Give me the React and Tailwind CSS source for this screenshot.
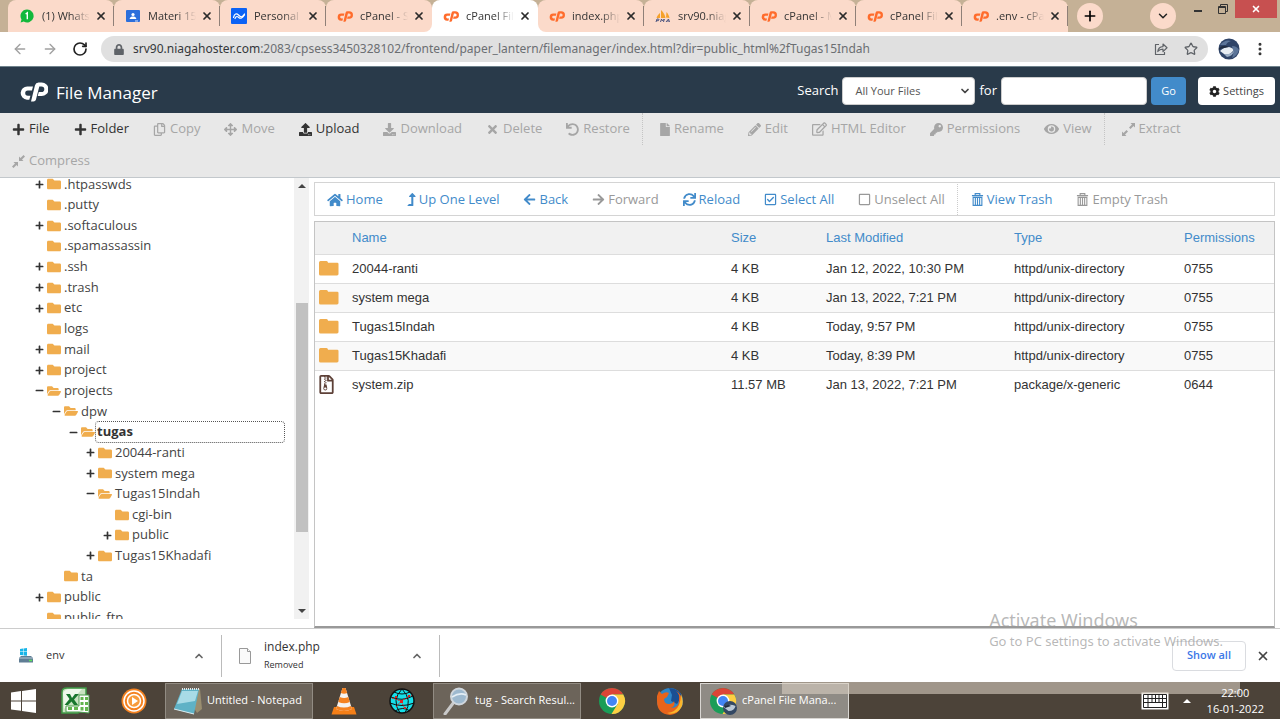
import React from "react";
import {
  FaPlus, FaMinus, FaRegCopy, FaArrowsAlt, FaUpload, FaDownload, FaTimes, FaUndo, FaFile, FaPencilAlt,
  FaRegEdit, FaKey, FaEye, FaHome, FaLevelUpAlt, FaArrowLeft, FaArrowRight,
  FaSync, FaRegCheckSquare, FaRegSquare, FaFolder, FaFolderOpen, FaCog, FaRegFileArchive, FaLock,
} from "react-icons/fa";
import { ArrowLeft, ArrowRight, RotateCw, Star, MoreVertical, ChevronDown, ChevronUp, X, Plus } from "lucide-react";

const CpLogo = ({ className }) => (
  <svg viewBox="0 0 28 20" className={className} fill="currentColor">
    <path d="M7.500 4.500H13l-1.100 4H7.800a2.600 2.600 0 0 0 0 5.200h2.600l-1.100 4H7A6.600 6.600 0 0 1 7.500 4.500z" />
    <path fillRule="evenodd" d="M11 19.500L15 3.200Q15.800.5 18.500.5h3.200a6.800 6.800 0 0 1 0 13.600h-4l1.100-4h2.700a2.800 2.800 0 0 0 0-5.600h-2.200L15.900 17.800Q15.400 19.500 13.500 19.500z" />
  </svg>
);
const WhatsApp = () => (
  <svg viewBox="0 0 14 14" className="h-3.5 w-3.5">
    <path d="M7 .5a6.500 6.500 0 1 1-3.200 12.100L.6 13.400l.9-3A6.500 6.500 0 0 1 7 .5z" fill="#12b83c" />
    <path d="M5.600 5l1.700-1.200v6.400" fill="none" stroke="#fff" strokeWidth="1.400" />
  </svg>
);
const Classroom = () => (
  <svg viewBox="0 0 14 14" className="h-3.5 w-3.5">
    <rect y="1" width="14" height="12" rx="1" fill="#2c6fdb" />
    <circle cx="7" cy="5.500" r="1.600" fill="#fff" />
    <path d="M3.600 10c.3-2 2-2.400 3.400-2.400s3.100.4 3.400 2.400z" fill="#fff" />
    <path d="M9 12h3" stroke="#cfe0fb" />
  </svg>
);
const Wave = () => (
  <svg viewBox="0 0 16 16" className="h-4 w-4">
    <rect width="16" height="16" rx="1" fill="#0b62f5" />
    <path d="M2.500 9.500C3.500 5.500 5.500 5 7.500 7s3.500 3 6-1M4 10.500c1.500-3 2.500-2 4-.8s3.500.3 5.500-2.700" fill="none" stroke="#fff" strokeWidth="1.200" strokeLinecap="round" />
  </svg>
);
const Pma = () => (
  <svg viewBox="0 0 16 14" className="h-3.5 w-4">
    <path d="M5 9V4C3.500 5 2 7 1.500 9zM6 9V1c2.500 2 4 5 4.500 8zM11 8.500L11.500 3c1.500 1.500 2.500 3.500 3 6z" fill="#f5a12b" />
    <path d="M1 13l1-3h1.500q1.300 1-.2 1.700H1.800M5.500 13l1-3 1 2 1.800-2-.8 3M11 13l2.500-3 1 3M12 12h2" fill="none" stroke="#4a5480" strokeWidth="1" />
  </svg>
);
const CpIcon = () => <CpLogo className="h-[11px] w-4 text-[#ff6c2c]" />;

const tabs = [
  { Icon: WhatsApp, title: "(1) WhatsApp", line: true },
  { Icon: Classroom, title: "Materi 15", line: true },
  { Icon: Wave, title: "Personal", line: true },
  { Icon: CpIcon, title: "cPanel - S", corner: "rounded-br-lg" },
  { Icon: CpIcon, title: "cPanel File", active: true },
  { Icon: CpIcon, title: "index.php", corner: "rounded-bl-lg", line: true },
  { Icon: Pma, title: "srv90.niag", line: true },
  { Icon: CpIcon, title: "cPanel - M", line: true },
  { Icon: CpIcon, title: "cPanel File", line: true },
  { Icon: CpIcon, title: ".env - cPan", line: true },
];

function Tab({ Icon, title, active, line, corner }) {
  return (
    <div className={corner ? "bg-[linear-gradient(to_bottom,#c5b196_50%,#fff_50%)]" : ""}>
      <div className={"flex h-8 w-[106px] items-center rounded-t-lg pl-[11px] " + (active ? "bg-white " : "bg-[#fbdaca] ") + (corner || "")}>
        <span className="flex w-4 shrink-0 justify-center"><Icon /></span>
        <span className="ml-[7px] w-[48px] overflow-hidden whitespace-nowrap text-[11px] text-[#333] [mask-image:linear-gradient(to_right,#000_60%,transparent)]">{title}</span>
        <button aria-label="Close tab" className="ml-[5px]"><X className="h-3 w-3 text-[#2b2b2b]" strokeWidth={3.500} /></button>
        <span className={line ? "ml-auto h-5 w-px bg-[#8f8078]" : "ml-auto w-px"} />
      </div>
    </div>
  );
}

function TabStrip() {
  return (
    <div className="flex h-8 bg-[#c5b196] pl-2">
      <div className="flex">
        {tabs.map((t, i) => <Tab key={i} {...t} />)}
      </div>
      <button aria-label="New tab" className="ml-[9px] mt-[3px] flex h-[26px] w-[26px] items-center justify-center rounded-full bg-[#fbdaca]"><Plus className="h-4 w-4 text-black" strokeWidth={2.500} /></button>
      <div className="ml-auto flex">
        <button aria-label="Search tabs" className="mr-[18px] mt-[3px] flex h-[26px] w-[26px] items-center justify-center rounded-full bg-[#fbdaca]"><ChevronDown className="h-3.5 w-3.5 text-[#222]" strokeWidth={2.500} /></button>
        <button aria-label="Minimize" className="flex h-[22px] w-6 items-center"><span className="h-0.5 w-2 bg-[#333]" /></button>
        <button aria-label="Restore" className="flex h-[18px] w-[17px] items-center">
          <svg viewBox="0 0 10 10" className="h-2.5 w-2.5" fill="none" stroke="#333"><path d="M2.500 2.500v-2h7v7h-2M.5 2.500h7v7h-7z" /><path d="M.5 3.500h7" /></svg>
        </button>
        <button aria-label="Close" className="mr-[3px] flex h-[18px] w-[42px] items-center justify-center bg-[#c75050]"><X className="h-2.5 w-2.5 text-white" strokeWidth={4} /></button>
      </div>
    </div>
  );
}

function AddressBar() {
  return (
    <div className="flex h-[34px] items-center bg-white px-3">
      <button aria-label="Back" className="mr-3.5"><ArrowLeft className="h-4 w-4 text-[#a0a0a0]" /></button>
      <button aria-label="Forward" className="mr-3.5"><ArrowRight className="h-4 w-4 text-[#a0a0a0]" /></button>
      <button aria-label="Reload" className="mr-[13px]"><RotateCw className="h-4 w-4 text-[#222]" strokeWidth={2.500} /></button>
      <div className="flex h-[26px] flex-1 items-center rounded-full bg-[#e0e0e0] pl-3 pr-2.5">
        <FaLock className="mr-2 h-[11px] w-3 text-[#5f6368]" />
        <span className="flex-1 whitespace-nowrap font-['Noto_Sans',sans-serif] text-[12px] text-[#6b6e72]"><span className="text-[#35383b]">srv90.niagahoster.com</span>:2083/cpsess3450328102/frontend/paper_lantern/filemanager/index.html?dir=public_html%2fTugas15Indah</span>
        <button aria-label="Share" className="mr-4">
          <svg viewBox="0 0 14 14" className="h-3.5 w-3.5" fill="none" stroke="#5f6368" strokeWidth="1.200" strokeLinejoin="round"><path d="M5 2.500H1.500v10h9V10" /><path d="M3.800 9.500c.3-3 2-4.700 5.200-4.900V2l4 3.800-4 3.800V7.200C6.500 7.200 5 8 3.800 9.500z" /></svg>
        </button>
        <button aria-label="Bookmark"><Star className="h-3.5 w-3.5 text-[#5f6368]" strokeWidth={2.200} /></button>
      </div>
      <button aria-label="Profile" className="ml-2.5">
        <svg viewBox="0 0 22 22" className="h-[22px] w-[22px]">
          <circle cx="11" cy="11" r="10.500" fill="#2f4468" />
          <path d="M2 7Q7 1 13 3q-4 1-5 4zM14 8q5 0 7 4-2 6-7 8 2-4 1-7z" fill="#5c7599" />
          <path d="M2 13q4-4 9-4 5 1 4 4-4 5-9 3z" fill="#e8edf2" />
          <path d="M6 16q6 1 10-3-1 5-7 6z" fill="#9db0c6" />
          <path d="M1 10q5-4 10-1l-5 1q-3 0-5 2z" fill="#202c40" />
        </svg>
      </button>
      <button aria-label="Menu" className="ml-3"><MoreVertical className="h-4 w-4 text-[#333]" strokeWidth={2.500} /></button>
    </div>
  );
}

function Header() {
  return (
    <header className="flex h-[47px] items-center border-t border-[#6f828c] bg-[#293a4a] pl-5 pr-[5px] text-white">
      <CpLogo className="mt-1 h-5 w-7" />
      <h1 className="ml-2 mt-1.5 text-[17px]">File Manager</h1>
      <form className="ml-auto mt-0.5 flex items-center text-[13px]">
        <label htmlFor="scope" className="mr-1">Search</label>
        <div className="relative">
          <select id="scope" className="h-7 w-[133px] appearance-none rounded-sm border border-[#ccc] bg-white pl-3 text-[11px] text-[#555]"><option>All Your Files</option></select>
          <ChevronDown className="pointer-events-none absolute right-1 top-2 h-3 w-3 text-[#444]" strokeWidth={3.500} />
        </div>
        <label htmlFor="query" className="mx-1">for</label>
        <input id="query" className="h-7 w-[146px] rounded-sm border border-[#ccc] bg-white px-2 text-[12px] text-[#333]" />
        <button type="button" className="ml-1 h-7 w-[35px] rounded-sm bg-[#428bca] text-[11px]">Go</button>
        <button type="button" className="ml-3 flex h-7 w-[77px] items-center justify-center gap-[3px] rounded-sm bg-white text-[11px] text-[#444]"><FaCog className="h-[11px] w-[11px] text-[#222]" />Settings</button>
      </form>
    </header>
  );
}

const Extract = (props) => (
  <svg viewBox="0 0 13 13" fill="currentColor" {...props}><path d="M8.500 0H13v4.500l-1.500-1.500L8.500 6 7 4.500l3-3zM4.500 13H0V8.500L1.500 10l3-3L6 8.500l-3 3z" /></svg>
);
const Compress = (props) => (
  <svg viewBox="0 0 13 13" fill="currentColor" {...props}><path d="M7 6V1.500l1.500 1.500L11.500 0 13 1.500 10 4.500 11.500 6zM6 7v4.500L4.500 10 1.500 13 0 11.500l3-3L1.500 7z" /></svg>
);

const actions = [
  { Icon: FaPlus, label: "File", on: true },
  { Icon: FaPlus, label: "Folder", on: true },
  { Icon: FaRegCopy, label: "Copy" },
  { Icon: FaArrowsAlt, label: "Move" },
  { Icon: FaUpload, label: "Upload", on: true },
  { Icon: FaDownload, label: "Download" },
  { Icon: FaTimes, label: "Delete" },
  { Icon: FaUndo, label: "Restore" },
  "|",
  { Icon: FaFile, label: "Rename", size: "h-[13px] w-2.5" },
  { Icon: FaPencilAlt, label: "Edit" },
  { Icon: FaRegEdit, label: "HTML Editor", size: "h-3.5 w-[15px]" },
  { Icon: FaKey, label: "Permissions" },
  { Icon: FaEye, label: "View", size: "h-3.5 w-[15px]" },
  "|",
  { Icon: Extract, label: "Extract" },
  { Icon: Compress, label: "Compress" },
];

function ActionBar() {
  return (
    <nav className="flex flex-wrap border-b border-[#c3c8cc] bg-[#e8e8e8] text-[13px]">
      {actions.map((a, i) =>
        a === "|" ? <span key={i} className="mr-[5px] h-8 border-l border-dotted border-[#c4c4c4]" /> : (
          <button key={i} className={a.on ? "flex h-8 items-center gap-1 px-3 text-[#333]" : "flex h-8 items-center gap-1 px-3 text-[#a6a6a6]"}>
            <a.Icon className={a.size || "h-[13px] w-[13px]"} />{a.label}
          </button>
        ))}
    </nav>
  );
}

const Trash = (props) => (
  <svg viewBox="0 0 13 14" fill="none" stroke="currentColor" strokeWidth="1.200" {...props}>
    <path d="M.5 2.800h12M4 2.500V.7h5v1.800M1.800 4.700h9.400v8.600H1.800z" /><path d="M4.200 5v8M6.500 5v8M8.800 5v8" />
  </svg>
);

const navigation = [
  { Icon: FaHome, label: "Home", on: true, size: "h-3.5 w-4" },
  { Icon: FaLevelUpAlt, label: "Up One Level", on: true, size: "h-[13px] w-[9px]" },
  { Icon: FaArrowLeft, label: "Back", on: true },
  { Icon: FaArrowRight, label: "Forward" },
  { Icon: FaSync, label: "Reload", on: true },
  { Icon: FaRegCheckSquare, label: "Select All", on: true },
  { Icon: FaRegSquare, label: "Unselect All" },
  "|",
  { Icon: Trash, label: "View Trash", on: true },
  { Icon: Trash, label: "Empty Trash" },
];

function NavigationBar() {
  return (
    <nav className="flex h-[34px] shrink-0 items-stretch border border-[#d4d4d4] pt-px text-[13px]">
      {navigation.map((a, i) =>
        a === "|" ? <span key={i} className="mr-px border-l border-dotted border-[#ccc]" /> : (
          <button key={i} className={a.on ? "flex items-center gap-[3px] px-3 text-[#428bca]" : "flex items-center gap-[3px] px-3 text-[#999]"}>
            <a.Icon className={a.size || "h-[13px] w-[13px]"} />{a.label}
          </button>
        ))}
    </nav>
  );
}

const tree = [
  [0, "+", ".htpasswds"], [0, "", ".putty"], [0, "+", ".softaculous"], [0, "", ".spamassassin"], [0, "+", ".ssh"],
  [0, "+", ".trash"], [0, "+", "etc"], [0, "", "logs"], [0, "+", "mail"], [0, "+", "project"], [0, "-", "projects"],
  [1, "-", "dpw"], [2, "-", "tugas"], [3, "+", "20044-ranti"], [3, "+", "system mega"], [3, "-", "Tugas15Indah"],
  [4, "", "cgi-bin"], [4, "+", "public"], [3, "+", "Tugas15Khadafi"], [1, "", "ta"], [0, "+", "public"], [0, "", "public_ftp"],
];
const indents = ["pl-[35px]", "pl-[52px]", "pl-[69px]", "pl-[86px]", "pl-[103px]"];

function TreeRow({ level, state, name }) {
  const Folder = state === "-" ? FaFolderOpen : FaFolder;
  const selected = name === "tugas";
  return (
    <li className={"flex min-h-0 flex-1 items-center pr-[9px] " + indents[level]}>
      <span className="w-3 text-[#333]">
        {state === "+" && <FaPlus className="h-[9px] w-[9px]" />}
        {state === "-" && <FaMinus className="h-[9px] w-[9px]" />}
      </span>
      <Folder className="h-3.5 w-3.5 shrink-0 text-[#f0ad4e]" />
      <a href="#" className={selected ? "flex h-[22px] flex-1 items-center rounded-sm border border-dotted border-[#555] pl-px font-bold text-[#333]" : "pl-[3px] text-[#444]"}>{name}</a>
    </li>
  );
}

function Sidebar() {
  return (
    <aside className="mb-[9px] flex w-[309px] shrink-0 overflow-hidden">
      <ul className="-mt-1 flex h-[454px] flex-1 flex-col text-[13px]">
        {tree.map(([level, state, name], i) => <TreeRow key={i} level={level} state={state} name={name} />)}
      </ul>
      <div className="flex w-[15px] flex-col items-center bg-[#f1f1f1]">
        <svg viewBox="0 0 8 4" className="mt-1.5 h-1 w-2"><path d="M0 4l4-4 4 4z" fill="#444" /></svg>
        <span className="grow-[115]" />
        <span className="w-3 grow-[229] bg-[#c1c1c1]" />
        <span className="grow-[77]" />
        <svg viewBox="0 0 8 4" className="mb-1.5 h-1 w-2"><path d="M0 0l4 4 4-4z" fill="#444" /></svg>
      </div>
    </aside>
  );
}

const files = [
  ["20044-ranti", "4 KB", "Jan 12, 2022, 10:30 PM", "httpd/unix-directory", "0755"],
  ["system mega", "4 KB", "Jan 13, 2022, 7:21 PM", "httpd/unix-directory", "0755"],
  ["Tugas15Indah", "4 KB", "Today, 9:57 PM", "httpd/unix-directory", "0755"],
  ["Tugas15Khadafi", "4 KB", "Today, 8:39 PM", "httpd/unix-directory", "0755"],
  ["system.zip", "11.57 MB", "Jan 13, 2022, 7:21 PM", "package/x-generic", "0644"],
];

function FileTable() {
  return (
    <div className="mt-[5px] min-h-0 flex-1 border border-b-2 border-[#c4c4c4] border-b-[#999]">
      <table className="w-full table-fixed text-left font-['Liberation_Sans',sans-serif] text-[13px] text-[#333]">
        <colgroup>
          <col className="w-[37px]" /><col /><col className="w-[95px]" /><col className="w-[188px]" /><col className="w-[170px]" /><col className="w-[90px]" />
        </colgroup>
        <thead>
          <tr className="h-8 border-b border-[#ddd] bg-[#f1f1f1] text-[#428bca]">
            <th aria-label="Kind" />
            {["Name", "Size", "Last Modified", "Type", "Permissions"].map((h) => <th key={h} className="font-normal">{h}</th>)}
          </tr>
        </thead>
        <tbody>
          {files.map((row) => (
            <tr key={row[0]} className="h-[29px] border-b border-[#ddd] last:border-b-0 even:bg-[#f9f9f9]">
              <td className="pl-1">
                {row[0].endsWith(".zip") ? <FaRegFileArchive className="h-[19px] w-[15px] text-[#5d4037]" /> : <svg viewBox="0 0 20 15" className="h-[15px] w-5" fill="#f0ad4e"><path d="M1.500 0h6q1.300 0 1.600 1.800h9.200q1.200 0 1.200 1.300v10q0 1.400-1.500 1.400h-16.500Q0 14.500 0 13V1.500Q0 0 1.500 0z" /></svg>}
              </td>
              {row.map((cell, i) => <td key={i}>{cell}</td>)}
            </tr>
          ))}
        </tbody>
      </table>
    </div>
  );
}

function Downloads() {
  return (
    <footer className="flex h-[54px] shrink-0 items-center border-t border-[#ccc] bg-white text-[12px] text-[#333]">
      <div className="flex h-[42px] w-[222px] items-center border-r border-[#bbb] pl-[18px] pr-4">
        <svg viewBox="0 0 16 16" className="h-4 w-4"><path d="M2 1l3-.4v3H2zM5.500.5L9 0v3.600H5.500zM2 4h3v3.300L2 7zM5.500 4H9v3.800l-3.500-.4z" fill="#19b5e8" /><path d="M1 10l2-2h10l2 2v4.500H1z" fill="#5f7d94" /><path d="M1 10h14" stroke="#b9cad6" /><path d="M11 12.500h3" stroke="#5be35b" strokeWidth="1.500" /></svg>
        <span className="ml-3 text-[11px]">env</span>
        <button aria-label="env options" className="ml-auto"><ChevronUp className="h-3 w-3 text-[#666]" strokeWidth={3.500} /></button>
      </div>
      <div className="flex h-[42px] w-[218px] items-center border-r border-[#bbb] pl-4 pr-4">
        <svg viewBox="0 0 14 16" className="h-4 w-3.5" fill="#fafafa" stroke="#999"><path d="M1.500.5h8l3 3v12h-11z" /><path d="M9.500.5v3h3" /></svg>
        <span className="ml-3 flex flex-col"><span className="leading-[18px]">index.php</span><span className="text-[9px] leading-[18px]">Removed</span></span>
        <button aria-label="index.php options" className="ml-auto"><ChevronUp className="h-3 w-3 text-[#666]" strokeWidth={3.500} /></button>
      </div>
      <button className="ml-auto h-[30px] rounded border border-[#dadce0] px-3.5 text-[11px] font-semibold text-[#3b78e7]">Show all</button>
      <button aria-label="Close downloads" className="ml-2.5 mr-2.5"><X className="h-3.5 w-3.5 text-[#444]" strokeWidth={3} /></button>
    </footer>
  );
}

const ChromeIcon = ({ avatar }) => (
  <svg viewBox="0 0 28 28" className="h-7 w-7">
    <circle cx="14" cy="14" r="13" fill="#1a9d58" />
    <path d="M14 14L2.700 7.500A13 13 0 0 1 25.300 7.500H14z" fill="#dc4437" />
    <path d="M14 7.500h11.300A13 13 0 0 1 13.500 27l6-9.700z" fill="#fdcf43" />
    <circle cx="14" cy="14" r="6.400" fill="#fff" /><circle cx="14" cy="14" r="5" fill="#4285f4" />
    {avatar && <><circle cx="21" cy="21" r="7" fill="#344863" /><path d="M14.500 20q6-4 12-1-1 5-7 5z" fill="#bac8d6" /><path d="M15 19q5-2 7 0l-6 2z" fill="#1f2c3f" /></>}
  </svg>
);

function TaskButton({ children, label, width, active }) {
  return (
    <button className={"flex h-9 items-center gap-[5px] border pl-2 text-[11px] text-white " + width + (active ? " border-[#d9d6d2] bg-[#8f8b85]" : " border-[#928c83] bg-[#6c645a]")}>
      {children}<span className="whitespace-nowrap">{label}</span>
    </button>
  );
}

function Taskbar() {
  return (
    <div className="relative flex h-[37px] shrink-0 items-center bg-[#4c4339]">
      <button aria-label="Start" className="ml-[11px]">
        <svg viewBox="0 0 25 24" className="h-6 w-[25px]" fill="#fff"><path d="M0 3.500l10-1.400v9.300H0zM11 2l14-2v11.400H11zM0 12.400h10v9.400L0 20.400zM11 12.400h14V24l-14-2z" /></svg>
      </button>
      <button aria-label="Spreadsheet" className="ml-[25px]">
        <svg viewBox="0 0 29 28" className="h-7 w-[29px]"><path d="M1 5q0-4 5-4h19v20l-8 5H1z" fill="#c8e3c0" stroke="#3f9a45" strokeWidth="1.500" /><path d="M2 6q2-4 7-4h12L3 22z" fill="#eef8ea" /><path d="M18 8h10v18l-10-1H5v-6h13z" fill="#fff" stroke="#4a9b4c" /><path d="M19.500 10h3v3h-3zM24 10h3v3h-3zM19.500 15h3v3h-3zM24 15h3v3h-3zM19.500 20h3v3.500h-3zM24 20h3v4h-3zM7 20h4v3H7zM13 20h4v3h-4z" fill="#62b54e" /><path d="M5 7h4l2 4 3-4h4l-5 5.500 4 5.500h-4l-2.500-3.500L7 18H3.500l5-6z" fill="#18762d" /></svg>
      </button>
      <button aria-label="Media player" className="ml-[31px]">
        <svg viewBox="0 0 26 26" className="h-[26px] w-[26px]"><circle cx="13" cy="13" r="12.500" fill="#f58220" /><circle cx="13" cy="13" r="10" fill="none" stroke="#fff" strokeWidth="1.500" /><circle cx="13" cy="13" r="6.500" fill="#f79b3c" stroke="#fff" strokeWidth="1.500" /><path d="M11 9l6 4-6 4z" fill="#fff" /></svg>
      </button>
      <div className="ml-[18px]"><TaskButton label="Untitled - Notepad" width="w-[148px]">
        <svg viewBox="0 0 28 28" className="h-7 w-7"><path d="M8 2h18l2 20-5 4z" fill="#9a8e70" /><path d="M8 2h17L20 27 0 22z" fill="#5fb2c6" /><path d="M8 4h16l-3 10L3 17z" fill="#a8dbe6" /><path d="M8 2h17" stroke="#e8e8e8" strokeWidth="2" strokeDasharray="1 1" /><path d="M0 22l20 5" stroke="#dceef2" /></svg>
      </TaskButton></div>
      <button aria-label="VLC" className="ml-[18px]">
        <svg viewBox="0 0 26 28" className="h-7 w-[26px]"><path d="M3 20h20l2.500 7.500H.5z" fill="#f57f17" /><path d="M11.500 1h3L21 22q-8 4-16 0z" fill="#f5f2ef" /><path d="M11.500 1h3l1.700 5q-3.200 1.500-6.300 0zM8.800 10q4.300 2 8.500 0l1.500 5q-5.500 2.500-11.500 0zM6 19q7 3 14 0l1 3q-8 4-16 0z" fill="#f58220" /></svg>
      </button>
      <button aria-label="Network" className="ml-8">
        <svg viewBox="0 0 26 26" className="h-[26px] w-[26px]"><circle cx="13" cy="13" r="12" fill="#16dfe8" stroke="#111" strokeWidth="1.500" /><path d="M2 9q11 5 22-1M1 15q12 5 24 0M6 23q8-5 15 0M13 1Q2 12 11 25M13 1q11 11 3 24M5 4q8 4 16 0" fill="none" stroke="#111" strokeWidth="1" /><path d="M3 10l9 3 11-6M12 13l4 8M12 13l-5 6" fill="none" stroke="#d22" strokeDasharray="2 1" /><path d="M11 12h3v3h-3zM6 8h2v2H6zM19 7h2v2h-2zM15 19h2v2h-2z" fill="#d22" /></svg>
      </button>
      <div className="ml-[18px]"><TaskButton label="tug - Search Resul..." width="w-[148px]">
        <svg viewBox="0 0 28 28" className="h-7 w-7"><path d="M3 27l9-12" stroke="#c9c9c9" strokeWidth="3" strokeLinecap="round" /><circle cx="17" cy="9.500" r="8" fill="#9db9cf" stroke="#cfd6dc" strokeWidth="2" /><path d="M10 10q8-5 14-2" stroke="#e4eef5" strokeWidth="1.500" fill="none" /></svg>
      </TaskButton></div>
      <button aria-label="Chrome" className="ml-[17px]"><ChromeIcon /></button>
      <button aria-label="Firefox" className="ml-[30px]">
        <svg viewBox="0 0 28 28" className="h-7 w-7"><circle cx="14" cy="14" r="13" fill="#2e86c8" /><path d="M13 1q9 0 13 8l-5 8-6-3 1-6z" fill="#1b4f93" /><path d="M1 9l2-5 3 3q4-3 7-1l-2 4-3 2q0 5 5 5 4 0 5-3 2 5-3 7 8 0 8-8 1-6-3-9 6 3 6 11-1 12-12 13Q1 27 1 14z" fill="#e8641b" /><path d="M25 7q5 12-4 18-5 3-10 1 9-1 12-8 2-5 2-11z" fill="#fbb62b" /></svg>
      </button>
      <div className="ml-4"><TaskButton label="cPanel File Mana..." width="w-[149px]" active><ChromeIcon avatar /></TaskButton></div>
      <div className="absolute right-10 top-0 h-3 w-[458px] bg-[#d9cec2]/60" />
      <div className="ml-auto flex items-center text-[11px] leading-4 text-white">
        <svg viewBox="0 0 28 18" className="h-[18px] w-7"><path d="M.5.5h27v17H.5z" fill="#fff" /><path d="M2.500 2.500h23v13h-23zM2.500 6.500h23M2.500 10.500h23M7 2.500v13M11 2.500v8M14.500 2.500v8M18 2.500v8M21.500 2.500v13" fill="none" stroke="#222" /></svg>
        <svg viewBox="0 0 8 4" className="ml-3.5 h-1 w-2"><path d="M0 4l4-4 4 4z" fill="#fff" /></svg>
        <div className="relative ml-4 mr-4 text-center"><div>22:00</div><div>16-01-2022</div></div>
      </div>
    </div>
  );
}

export default function App() {
  return (
    <div className="relative flex h-screen flex-col overflow-hidden bg-white font-['Open_Sans',sans-serif]">
      <TabStrip />
      <AddressBar />
      <Header />
      <ActionBar />
      <main className="flex min-h-0 flex-1">
        <Sidebar />
        <section className="ml-[5px] mr-[5px] mt-1 flex min-w-0 flex-1 flex-col">
          <NavigationBar />
          <FileTable />
        </section>
      </main>
      <Downloads />
      <Taskbar />
      <div className="pointer-events-none absolute bottom-[68px] right-[57px] font-['Noto_Sans',sans-serif] text-[#999]/70">
        <div className="text-[18px] leading-[22px]">Activate Windows</div>
        <div className="text-[13px] leading-5">Go to PC settings to activate Windows.</div>
      </div>
    </div>
  );
}
